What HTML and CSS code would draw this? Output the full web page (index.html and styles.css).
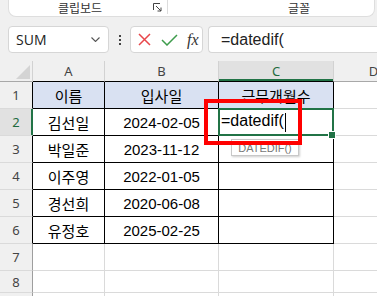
FILE: index.html
```html
<!DOCTYPE html>
<html lang="ko">
<head>
  <meta charset="UTF-8" />
  <title>근무개월수</title>
  <link rel="stylesheet" href="styles.css">
</head>
<body>
  <div class="ribbon">
    <div class="group group-clip">
      <span class="group-label">클립보드</span>
      <svg class="launcher" width="9" height="9" viewBox="0 0 9 9">
        <path d="M0.5 7V0.5H7" fill="none" stroke="#444" stroke-width="1"/>
        <path d="M3 3L8 8M8 4.5V8H4.5" fill="none" stroke="#444" stroke-width="1"/>
      </svg>
    </div>
    <div class="group group-font">
      <span class="group-label">글꼴</span>
    </div>
  </div>

  <div class="formula-bar">
    <div class="name-box">
      <span>SUM</span>
      <svg class="chevron" width="9" height="5" viewBox="0 0 9 5">
        <path d="M0.5 0.5L4.5 4.5L8.5 0.5" fill="none" stroke="#555" stroke-width="1.1"/>
      </svg>
    </div>
    <div class="dots"><i></i><i></i><i></i></div>
    <div class="edit-btns">
      <svg width="13" height="13" viewBox="0 0 13 13">
        <path d="M1 1L12 12M12 1L1 12" stroke="#e8474b" stroke-width="1.5"/>
      </svg>
      <svg width="17" height="12" viewBox="0 0 17 12">
        <path d="M1 6L6 11L16 1" fill="none" stroke="#3e9c4c" stroke-width="1.5"/>
      </svg>
      <span class="fx">fx</span>
    </div>
    <div class="formula-input">=datedif(</div>
  </div>

  <div class="sheet">
    <table class="grid">
      <colgroup>
        <col style="width: 33px">
        <col style="width: 72px">
        <col style="width: 114px">
        <col style="width: 115px">
        <col style="width: 80px">
      </colgroup>
      <tr class="col-head">
        <th class="corner"><span class="tri"></span></th>
        <th class="edge">A</th>
        <th class="edge">B</th>
        <th class="edge sel">C</th>
        <th>D</th>
      </tr>
      <tr>
        <th class="row-num edge">1</th>
        <td class="t hd">이름</td>
        <td class="t hd">입사일</td>
        <td class="t hd">근무개월수</td>
        <td></td>
      </tr>
      <tr>
        <th class="row-num sel">2</th>
        <td class="t">김선일</td>
        <td class="t">2024-02-05</td>
        <td class="t active"><span class="entry">=datedif(</span><span class="caret"></span></td>
        <td></td>
      </tr>
      <tr>
        <th class="row-num edge">3</th>
        <td class="t">박일준</td>
        <td class="t">2023-11-12</td>
        <td class="t"></td>
        <td></td>
      </tr>
      <tr>
        <th class="row-num edge">4</th>
        <td class="t">이주영</td>
        <td class="t">2022-01-05</td>
        <td class="t"></td>
        <td></td>
      </tr>
      <tr>
        <th class="row-num edge">5</th>
        <td class="t">경선희</td>
        <td class="t">2020-06-08</td>
        <td class="t"></td>
        <td></td>
      </tr>
      <tr>
        <th class="row-num edge">6</th>
        <td class="t">유정호</td>
        <td class="t">2025-02-25</td>
        <td class="t"></td>
        <td></td>
      </tr>
      <tr>
        <th class="row-num">7</th>
        <td></td><td></td><td></td><td></td>
      </tr>
      <tr class="short">
        <th class="row-num">8</th>
        <td></td><td></td><td></td><td></td>
      </tr>
      <tr>
        <th class="row-num"></th>
        <td></td><td></td><td></td><td></td>
      </tr>
    </table>

    <div class="tip">DATEDIF()</div>
    <div class="mark"></div>
  </div>
</body>
</html>
```

FILE: styles.css
```css
* {
  box-sizing: border-box;
}

body {
  margin: 0;
  width: 377px;
  height: 296px;
  overflow: hidden;
  background: #f0f0f0;
  font-family: "Liberation Sans", "Noto Sans CJK KR", sans-serif;
  color: #000;
}

/* RIBBON */
.ribbon {
  display: flex;
  width: 367px;
  height: 17px;
  margin-left: 8px;
  background: #fff;
  border: 1px solid #dedede;
  border-top: none;
  border-radius: 0 0 8px 8px;
}

.group {
  display: flex;
  align-items: center;
  height: 14px;
  font-family: "Noto Sans CJK KR", sans-serif;
  font-size: 12px;
  color: #333;
}

.group-clip {
  width: 159px;
  padding-left: 49px;
  border-right: 1px solid #dcdcdc;
}

.launcher {
  margin-left: 51px;
}

.group-font {
  padding-left: 120px;
}

.group-label {
  line-height: 14px;
  margin-top: 2px;
}

/* FORMULA BAR */
.formula-bar {
  display: flex;
  align-items: center;
  height: 27px;
  margin-top: 9px;
  padding-left: 8px;
}

.name-box {
  display: flex;
  align-items: center;
  justify-content: space-between;
  width: 101px;
  height: 27px;
  padding: 0 8px 0 7px;
  background: #fff;
  border: 1px solid #d6d6d6;
  border-radius: 4px;
  font-family: "Open Sans", sans-serif;
  font-size: 14px;
  color: #222;
}

.dots {
  display: flex;
  flex-direction: column;
  gap: 2px;
  width: 21px;
  align-items: center;
}

.dots i {
  width: 2px;
  height: 2px;
  background: #444;
}

.edit-btns {
  display: flex;
  align-items: center;
  gap: 10px;
  width: 73px;
  height: 27px;
  padding-left: 7px;
  background: #fff;
  border: 1px solid #d6d6d6;
  border-radius: 4px;
}

.fx {
  font-family: "Liberation Serif", serif;
  font-style: italic;
  font-size: 16px;
  color: #333;
  margin-left: -1px;
}

.formula-input {
  flex: 1;
  height: 27px;
  margin-left: 5px;
  padding-left: 12px;
  background: #fff;
  border: 1px solid #d6d6d6;
  border-right: none;
  border-radius: 4px 0 0 4px;
  font-size: 16px;
  line-height: 25px;
  color: #222;
}

/* SHEET */
.sheet {
  position: relative;
  margin-top: 8px;
}

.grid {
  table-layout: fixed;
  width: 414px;
  border-collapse: separate;
  border-spacing: 0;
}

.grid th,
.grid td {
  height: 27px;
  padding: 0;
  border-right: 1px solid #dadada;
  border-bottom: 1px solid #dadada;
  text-align: center;
  white-space: nowrap;
  overflow: hidden;
}

.grid td {
  background: #fff;
  font-size: 15px;
}

.grid th {
  background: #f0f0f0;
  font-family: "Noto Sans", sans-serif;
  font-weight: normal;
  font-size: 13px;
  color: #444;
}

.col-head th {
  height: 21px;
  border-right-color: #d2d2d2;
  border-bottom-color: #a8a8a8;
}

.col-head th.edge {
  border-bottom-color: #000;
}

.corner {
  position: relative;
}

.tri {
  position: absolute;
  right: 2px;
  bottom: 2px;
  width: 0;
  height: 0;
  border-left: 14px solid transparent;
  border-bottom: 14px solid #d4d4d4;
}

.row-num {
  border-right-color: #9e9e9e !important;
}

.row-num.edge {
  border-right-color: #000 !important;
}

.grid th.sel {
  background: #e1e1e1;
  color: #1e6b3e;
}

.col-head th.sel {
  box-shadow: inset 0 -2px 0 #217346;
}

.row-num.sel {
  border-right-color: #217346 !important;
  box-shadow: inset -1px 0 0 #217346;
}

.short th,
.short td {
  height: 22px;
}

.grid td.t {
  border-right-color: #000;
  border-bottom-color: #000;
}

.grid td.hd {
  background: #d9e1f2;
}

.grid td.active {
  position: relative;
  text-align: left;
  padding-left: 2px;
  overflow: visible;
  font-size: 16px;
}

.active::after {
  content: "";
  position: absolute;
  inset: -1px;
  border: 2px solid #217346;
}

.active::before {
  content: "";
  position: absolute;
  right: -3px;
  bottom: -4px;
  width: 6px;
  height: 6px;
  background: #217346;
  border: 1px solid #fff;
  z-index: 1;
}

.caret {
  display: inline-block;
  width: 1px;
  height: 19px;
  margin-left: 1px;
  vertical-align: middle;
  background: #000;
}

/* OVERLAYS */
.tip {
  position: absolute;
  left: 231px;
  top: 78px;
  width: 68px;
  height: 17px;
  background: #fff;
  border: 1px solid #c8c8c8;
  box-shadow: 1px 1px 2px rgba(0, 0, 0, 0.2);
  font-size: 11px;
  line-height: 17px;
  text-align: center;
  color: #777;
}

.mark {
  position: absolute;
  left: 204px;
  top: 38px;
  width: 98px;
  height: 46px;
  border: 4px solid #f00;
}
```
